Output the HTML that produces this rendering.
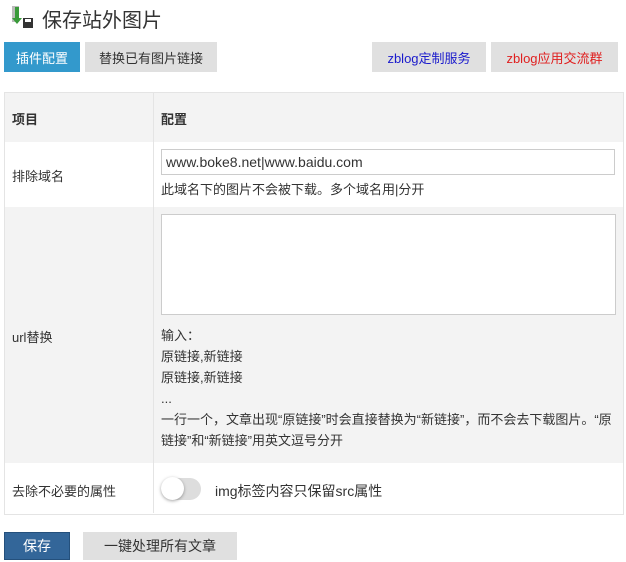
<html><head><style>
body{margin:0;width:626px;height:562px;background:#fff;font-family:"Liberation Sans","Noto Sans CJK SC",sans-serif;font-size:13px;color:#333;position:relative;overflow:hidden}
.a{position:absolute}
.btn{position:absolute;display:flex;align-items:center;justify-content:center;font-size:13px}
</style></head><body>
<svg class="a" style="left:11px;top:5px" width="24" height="24" viewBox="0 0 24 24"><rect x="1" y="1" width="7" height="16" fill="#bbb"/><path d="M4 2v11h-3l5 6 5-6h-3V2z" fill="#3a9a3a"/><rect x="12" y="13" width="10" height="10" fill="#333"/><rect x="14" y="14" width="6" height="3" fill="#fff"/></svg>
<div class="a" style="left:42px;top:4px;font-size:20px;color:#333">保存站外图片</div>
<div class="btn" style="left:4px;top:42px;width:76px;height:30px;background:#3399cc;color:#fff">插件配置</div>
<div class="btn" style="left:85px;top:42px;width:132px;height:30px;background:#e0e0e0;color:#333">替换已有图片链接</div>
<div class="btn" style="left:372px;top:42px;width:114px;height:30px;background:#e0e0e0;color:#1a1acc">zblog定制服务</div>
<div class="btn" style="left:491px;top:42px;width:127px;height:30px;background:#e0e0e0;color:#e02020">zblog应用交流群</div>
<div class="a" style="left:4px;top:92px;width:618px;height:421px;border:1px solid #e4e4e4"></div>
<div class="a" style="left:5px;top:93px;width:618px;height:49px;background:#f3f3f3"></div>
<div class="a" style="left:5px;top:207px;width:618px;height:256px;background:#f3f3f3"></div>
<div class="a" style="left:153px;top:93px;width:1px;height:420px;background:#e4e4e4"></div>
<div class="a" style="left:12px;top:109px;font-weight:bold">项目</div>
<div class="a" style="left:161px;top:109px;font-weight:bold">配置</div>
<div class="a" style="left:12px;top:166px">排除域名</div>
<div class="a" style="left:161px;top:149px;width:452px;height:24px;border:1px solid #ccc;background:#fff;font-size:14px;line-height:24px;padding-left:4px;box-sizing:content-box;width:448px">www.boke8.net|www.baidu.com</div>
<div class="a" style="left:161px;top:179px">此域名下的图片不会被下载。多个域名用|分开</div>
<div class="a" style="left:161px;top:214px;width:453px;height:99px;border:1px solid #ccc;background:#fff"></div>
<div class="a" style="left:12px;top:327px">url替换</div>
<div class="a" style="left:161px;top:325px;line-height:21px;width:460px">输入：<br>原链接,新链接<br>原链接,新链接<br>...<br>一行一个，文章出现“原链接”时会直接替换为“新链接”，而不会去下载图片。“原链接”和“新链接”用英文逗号分开</div>
<div class="a" style="left:12px;top:481px">去除不必要的属性</div>
<div class="a" style="left:161px;top:478px;width:40px;height:22px;border-radius:11px;background:#ddd"></div>
<div class="a" style="left:161px;top:477px;width:23px;height:23px;border-radius:50%;background:#fff;box-shadow:0 1px 3px rgba(0,0,0,.35)"></div>
<div class="a" style="left:215px;top:481px;font-size:14px">img标签内容只保留src属性</div>
<div class="btn" style="left:4px;top:532px;width:66px;height:28px;background:#336699;border:1px solid #24507c;box-sizing:border-box;color:#fff;font-size:14px">保存</div>
<div class="btn" style="left:83px;top:532px;width:154px;height:28px;background:#e0e0e0;color:#333;font-size:14px">一键处理所有文章</div>
</body></html>
